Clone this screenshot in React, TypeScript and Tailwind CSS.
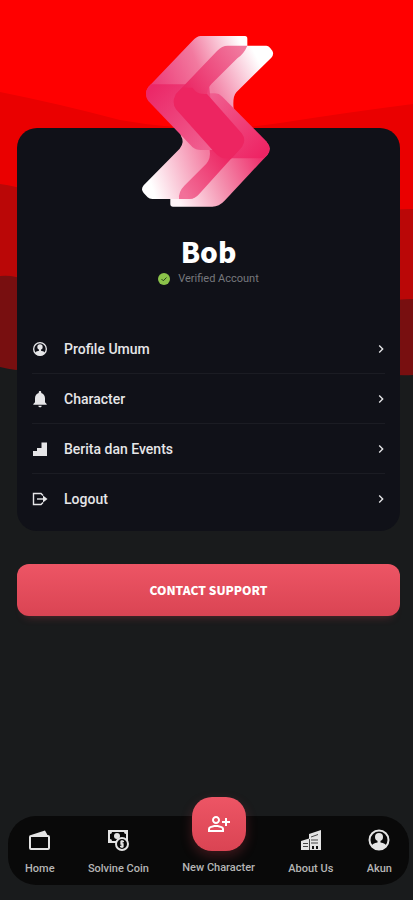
import { useId, type ReactNode } from "react";
import { MdNotifications, MdOutlinePersonAddAlt, MdChevronRight } from "react-icons/md";

function Waves() {
  return (
    <svg
      className="absolute inset-x-0 top-0 h-96 w-full"
      viewBox="0 0 413 384"
      preserveAspectRatio="none"
      aria-hidden="true"
    >
      <path fill="#780f10" d="M0 0H413V375Q400 376 385 374Q210 340 16 370Q8 369 0 367Z" />
      <path fill="#ba0707" d="M0 0H413V299Q400 299 380 302Q200 330 16 277Q8 275 0 276Z" />
      <path fill="#ea0000" d="M0 0H413V209Q406 209 390 210Q200 230 16 187Q8 185 0 184Z" />
      <path fill="#ff0000" d="M0 0H413V104Q350 112 280 123Q205 135 120 120Q60 104 0 92Z" />
    </svg>
  );
}

function Logo() {
  const id = useId();
  return (
    <svg className="h-[190px] w-40" viewBox="0 0 480 570" role="img" aria-label="Solvine">
      <defs>
        <linearGradient id={id + "a"} gradientUnits="userSpaceOnUse" x1="80" y1="200" x2="350" y2="90">
          <stop offset="0" stopColor="#ed3c78" />
          <stop offset="0.5" stopColor="#f2799f" />
          <stop offset="1" stopColor="#ffffff" />
        </linearGradient>
        <linearGradient id={id + "b"} gradientUnits="userSpaceOnUse" x1="60" y1="460" x2="240" y2="400">
          <stop offset="0" stopColor="#ffffff" />
          <stop offset="1" stopColor="#f37ba0" />
        </linearGradient>
        <linearGradient id={id + "c"} gradientUnits="userSpaceOnUse" x1="140" y1="510" x2="390" y2="400">
          <stop offset="0" stopColor="#fff5f8" />
          <stop offset="0.5" stopColor="#f492b0" />
          <stop offset="1" stopColor="#ef3570" />
        </linearGradient>
        <linearGradient id={id + "d"} gradientUnits="userSpaceOnUse" x1="410" y1="110" x2="250" y2="190">
          <stop offset="0.1" stopColor="#ffffff" />
          <stop offset="1" stopColor="#f27fa4" />
        </linearGradient>
        <linearGradient id={id + "e"} gradientUnits="userSpaceOnUse" x1="160" y1="190" x2="340" y2="70">
          <stop offset="0" stopColor="#eb2563" />
          <stop offset="1" stopColor="#f17ba0" />
        </linearGradient>
        <linearGradient id={id + "f"} gradientUnits="userSpaceOnUse" x1="160" y1="500" x2="310" y2="400">
          <stop offset="0" stopColor="#f27099" />
          <stop offset="1" stopColor="#ec2260" />
        </linearGradient>
        <linearGradient id={id + "g"} gradientUnits="userSpaceOnUse" x1="60" y1="200" x2="230" y2="370">
          <stop offset="0" stopColor="#eb2868" />
          <stop offset="1" stopColor="#f05f90" />
        </linearGradient>
        <linearGradient id={id + "h"} gradientUnits="userSpaceOnUse" x1="240" y1="210" x2="410" y2="380">
          <stop offset="0" stopColor="#f05f90" />
          <stop offset="1" stopColor="#ee2464" />
        </linearGradient>
      </defs>
      <path fill={`url(#${id}c)`} d="M280 340L414 353Q430 370 415 390L286 528Q270 545 250 545H132Q124 545 124 537V518Z" />
      <path fill={`url(#${id}d)`} d="M290 62H412Q418 62 423 68L430 77Q436 88 427 98L322 202Q310 215 314 253L280 240L205 205Z" />
      <path fill={`url(#${id}h)`} d="M205 205H258Q270 205 280 215L412 349Q430 370 415 390L405 400H300L240 330Z" />
      <path fill={`url(#${id}b)`} d="M152 315L156 333Q168 352 152 371L44 481Q34 493 44 504L56 517Q61 522 70 522H190L300 400V340Z" />
      <path fill={`url(#${id}a)`} d="M215 33H348Q355 33 355 41V62L240 185L130 250L58 226Q44 205 58 186L190 48Q204 33 215 33Z" />
      <path fill={`url(#${id}g)`} d="M66 178H240L260 375H215Q200 375 190 366L58 228Q44 207 58 186Z" />
      <path fill={`url(#${id}e)`} d="M296 62H355Q345 86 325 100L248 176Q234 190 234 207L140 230V208L264 78Q279 62 296 62Z" />
      <path fill={`url(#${id}f)`} d="M242 375H330L338 366L210 508Q198 522 182 522H150Q148 500 166 482L232 416Q246 400 242 375Z" />
      <path fill="#ed2561" d="M160 188H190Q205 210 234 207L338 325Q353 345 339 366L308 400H285Q268 395 255 380L141 253Q127 232 140 209Z" />
    </svg>
  );
}

function AccountIcon({ className }: { className: string }) {
  const id = useId();
  return (
    <svg className={className} viewBox="0 0 24 24" fill="currentColor" aria-hidden="true">
      <clipPath id={id}>
        <circle cx="12" cy="12" r="10" />
      </clipPath>
      <circle cx="12" cy="12" r="9.500" fill="none" stroke="currentColor" strokeWidth="2" />
      <circle cx="12" cy="9" r="4" />
      <path clipPath={`url(#${id})`} d="M10.500 12h3v2.500q5 .8 6 3.500V24H4.500v-6q1-2.700 6-3.500Z" />
    </svg>
  );
}

function BarsIcon() {
  return (
    <svg className="size-4" viewBox="0 0 16 16" fill="currentColor" aria-hidden="true">
      <path d="M1 10h4V7h4.500V1.500H15V15H1Z" />
    </svg>
  );
}

function LogoutIcon() {
  return (
    <svg className="size-4" viewBox="0 0 16 16" fill="none" stroke="currentColor" strokeWidth="1.4" aria-hidden="true">
      <path d="M11 4.500L9 2.500H1.500V13.500H9L11 11.500" />
      <path d="M5 8H14" />
      <path d="M11 4.500L15.500 8L11 11.500Z" fill="currentColor" stroke="none" />
    </svg>
  );
}

function WalletIcon() {
  return (
    <svg className="size-6" viewBox="0 0 24 24" fill="none" stroke="currentColor" strokeWidth="2" aria-hidden="true">
      <rect x="2" y="8" width="19" height="13" rx="1" />
      <path d="M3 7L17 2.500L20 8Z" fill="currentColor" stroke="none" />
    </svg>
  );
}

function CoinIcon() {
  return (
    <svg className="size-6" viewBox="0 0 24 24" aria-hidden="true">
      <path fill="currentColor" fillRule="evenodd" d="M2 2H22V15H2ZM6 4Q6 6 4 6V11Q6 11 6 13H18Q18 11 20 11V6Q18 6 18 4Z" />
      <circle cx="11" cy="8" r="3" fill="currentColor" />
      <circle cx="16" cy="16" r="6" fill="#090909" stroke="currentColor" strokeWidth="2" />
      <path d="M18 13.500H15V16H17V18.500H14M16 12V20" fill="none" stroke="currentColor" strokeWidth="1.300" />
    </svg>
  );
}

function BuildingIcon() {
  return (
    <svg className="size-6" viewBox="0 0 24 24" aria-hidden="true">
      <path fill="currentColor" d="M2 22V13L10 10.500V6L22 2V22Z" />
      <path stroke="#444" strokeWidth="1" d="M4 15.500H9M4 18.500H9M12 9L19 6.500M12 12H19M12 15H19M10.500 11V22" />
      <path fill="#111" d="M13 18h2v3h-2zM17 18h2v3h-2z" />
    </svg>
  );
}

const menu: { label: string; icon: ReactNode }[] = [
  { label: "Profile Umum", icon: <AccountIcon className="size-4" /> },
  { label: "Character", icon: <MdNotifications className="size-4 scale-125" /> },
  { label: "Berita dan Events", icon: <BarsIcon /> },
  { label: "Logout", icon: <LogoutIcon /> },
];

function NavItem({ label, icon }: { label: string; icon: ReactNode }) {
  return (
    <a href="#" className="flex flex-col items-center gap-[9px] pt-3 text-[#b5b5b5]">
      <span className="text-[#e4e4e4]">{icon}</span>
      <span className="text-[11px] leading-4 font-medium whitespace-nowrap">{label}</span>
    </a>
  );
}

export default function App() {
  return (
    <div className="relative isolate flex min-h-screen flex-col bg-[#191b1c] font-['Roboto',sans-serif]">
      <div className="absolute inset-x-0 top-0 -z-10">
        <Waves />
      </div>
      <main className="flex-1 pt-32 pr-[13px] pl-[17px]">
        <section className="flex flex-col rounded-[20px] bg-[#101118] px-[15px] pb-2">
          <div className="-mt-[103px] flex justify-center">
            <Logo />
          </div>
          <h1 className="mt-4 text-center font-['Noto_Sans_CJK_SC',sans-serif] text-[28px] leading-10 font-black text-white">
            Bob
          </h1>
          <p className="flex items-center justify-center gap-2 text-[11px] leading-4 text-[#77787d]">
            <svg className="size-3" viewBox="0 0 12 12" aria-hidden="true">
              <circle cx="6" cy="6" r="6" fill="#8bc34a" />
              <path d="M3.500 6L5.300 7.800L8.500 4.500" fill="none" stroke="#28421a" strokeWidth="1" />
            </svg>
            Verified Account
          </p>
          <ul className="mt-[37px] divide-y divide-[#1b1c23]">
            {menu.map((m) => (
              <li key={m.label}>
                <a href="#" className="flex h-[49px] items-center text-sm font-medium text-[#e6e6e8]">
                  <span className="mr-4">{m.icon}</span>
                  <span className="flex-1">{m.label}</span>
                  <MdChevronRight className="-mr-1 size-4" />
                </a>
              </li>
            ))}
          </ul>
        </section>
        <button
          type="button"
          className="mt-[33px] h-[52px] w-full rounded-xl bg-linear-to-b from-[#ed5565] to-[#da4453] font-['Noto_Sans_CJK_SC',sans-serif] text-xs font-black text-white shadow-[0_8px_10px_-8px_#da445366]"
        >
          CONTACT SUPPORT
        </button>
      </main>
      <nav className="mr-1 mb-[15px] ml-2 flex h-[69px] justify-between rounded-[28px] bg-[#090909] px-[17px]">
        <NavItem label="Home" icon={<WalletIcon />} />
        <NavItem label="Solvine Coin" icon={<CoinIcon />} />
        <a href="#" className="-mt-[19px] flex flex-col items-center gap-[9px] text-[#b5b5b5]">
          <span className="flex size-[54px] items-center justify-center rounded-[20px] bg-linear-to-b from-[#ed5565] to-[#da4453] text-white shadow-[0_5px_12px_#da445340]">
            <MdOutlinePersonAddAlt className="size-6" />
          </span>
          <span className="text-[11px] leading-4 font-medium whitespace-nowrap">New Character</span>
        </a>
        <NavItem label="About Us" icon={<BuildingIcon />} />
        <NavItem label="Akun" icon={<AccountIcon className="size-6" />} />
      </nav>
    </div>
  );
}
